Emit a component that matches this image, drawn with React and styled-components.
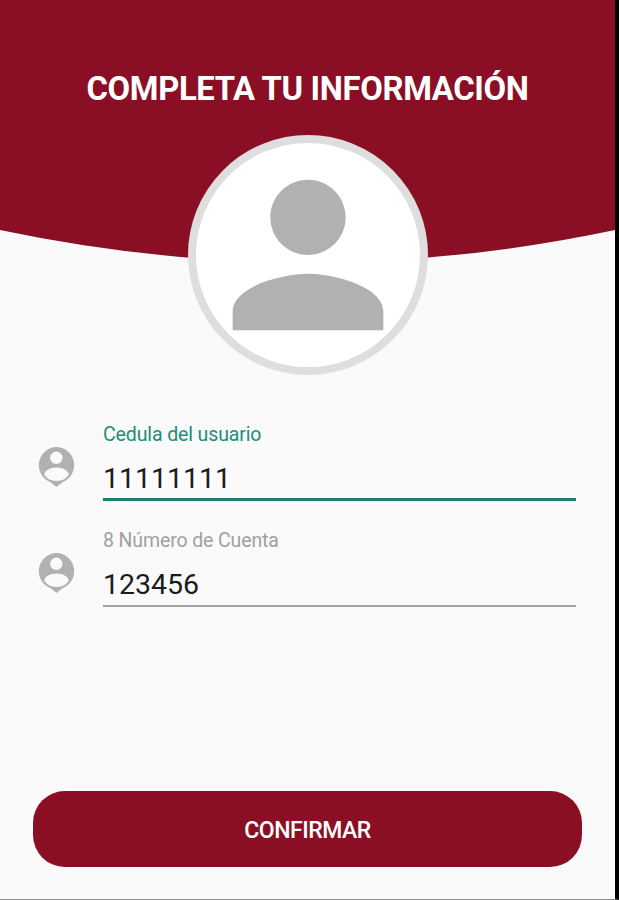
import React, { useState } from "react";
import { createGlobalStyle, styled } from "styled-components";

function App() {
  const [cedula, setCedula] = useState("11111111");
  const [cuenta, setCuenta] = useState("123456");

  return (
    <Screen>
      <GlobalStyle />
      <Header>
        <Curve viewBox="0 0 615 263" preserveAspectRatio="none">
          <path d="M0 0H615V230Q307.5 295 0 230Z" fill="#8a0f25" />
        </Curve>
        <Title>COMPLETA TU INFORMACIÓN</Title>
        <Avatar>
          <svg width="226" height="226" viewBox="0 0 24 24" fill="#b1b1b1">
            <path d="M12 12c2.21 0 4-1.79 4-4s-1.79-4-4-4-4 1.79-4 4 1.79 4 4 4zm0 2c-2.67 0-8 1.34-8 4v2h16v-2c0-2.66-5.33-4-8-4z" />
          </svg>
        </Avatar>
      </Header>

      <Form>
        <Field label="Cedula del usuario" value={cedula} onChange={setCedula} active />
        <Field label="8 Número de Cuenta" value={cuenta} onChange={setCuenta} />
      </Form>

      <ConfirmButton>CONFIRMAR</ConfirmButton>
    </Screen>
  );
}

function Field({ label, value, onChange, active }) {
  return (
    <FieldRow>
      <PinIcon />
      <FieldBody $active={active}>
        <Label $active={active}>{label}</Label>
        <Input
          value={value}
          spellCheck={false}
          onChange={(e) => onChange(e.target.value)}
        />
      </FieldBody>
    </FieldRow>
  );
}

function PinIcon() {
  return (
    <PinSvg viewBox="0 0 37 40">
      <path
        fill="#b1b1b1"
        fillRule="evenodd"
        d="M18.5 0A18.2 18.2 0 0 0 12.5 35.2L18.5 40L24.5 35.2A18.2 18.2 0 0 0 18.5 0ZM18.3 4.6a6.2 6.2 0 1 1 0 12.4a6.2 6.2 0 0 1 0-12.4ZM18.5 34C12.6 34 8.4 31.4 6.2 27.6C6.8 23.4 12.4 20.6 18.5 20.6S30.2 23.4 30.8 27.6C28.6 31.4 24.4 34 18.5 34Z"
      />
    </PinSvg>
  );
}

export default App;

const GlobalStyle = createGlobalStyle`
  * {
    box-sizing: border-box;
  }

  body {
    margin: 0;
    background-color: #fafafa;
    font-family: Roboto, sans-serif;
  }
`;

const Screen = styled.div`
  display: flex;
  flex-direction: column;
  width: 619px;
  height: 900px;
  background-color: #fafafa;
  border-right: 4px solid #000;
  border-bottom: 1px solid #8a8a8a;
  overflow: hidden;
`;

const Header = styled.header`
  position: relative;
  display: flex;
  flex-direction: column;
  align-items: center;
  height: 375px;
  padding-top: 68px;
`;

const Curve = styled.svg`
  position: absolute;
  top: 0;
  left: 0;
  width: 100%;
  height: 263px;
`;

const Title = styled.h1`
  position: relative;
  margin: 0;
  height: 67px;
  font-size: 32.8px;
  line-height: 42px;
  font-weight: 700;
  letter-spacing: -0.36px;
  color: #fff;
  white-space: nowrap;
`;

const Avatar = styled.div`
  position: relative;
  display: flex;
  flex-shrink: 0;
  align-items: center;
  justify-content: center;
  width: 240px;
  height: 240px;
  padding-bottom: 1px;
  border: 8px solid #dedede;
  border-radius: 50%;
  background-color: #fff;

  svg {
    flex-shrink: 0;
  }
`;

const Form = styled.div`
  display: flex;
  flex-direction: column;
  gap: 22px;
  padding: 47px 39px 0 38px;
`;

const FieldRow = styled.div`
  display: flex;
  gap: 28px;
  height: 84px;
`;

const PinSvg = styled.svg`
  flex-shrink: 0;
  width: 37px;
  height: 40px;
  margin-top: 25px;
`;

const FieldBody = styled.label`
  display: flex;
  flex: 1;
  flex-direction: column;
  height: 79px;
  border-bottom: ${({ $active }) =>
    $active ? "3px solid #1f7d6c" : "2px solid #a3a3a3"};
`;

const Label = styled.span`
  padding-top: 1px;
  font-size: 19.5px;
  line-height: 24px;
  letter-spacing: -0.12px;
  color: ${({ $active }) => ($active ? "#1d8d78" : "#a0a0a0")};
`;

const Input = styled.input`
  width: 100%;
  height: 36px;
  margin-top: 13px;
  padding: 0;
  border: none;
  outline: none;
  background: transparent;
  font-family: inherit;
  font-size: 28.5px;
  color: #1c1c1c;
`;

const ConfirmButton = styled.button`
  height: 76px;
  margin: auto 33px 32px;
  padding: 3px 0 0;
  border: none;
  border-radius: 32px;
  background-color: #8a0f25;
  font-family: inherit;
  font-size: 23px;
  font-weight: 500;
  letter-spacing: -0.5px;
  color: #fff;
  cursor: pointer;
`;
